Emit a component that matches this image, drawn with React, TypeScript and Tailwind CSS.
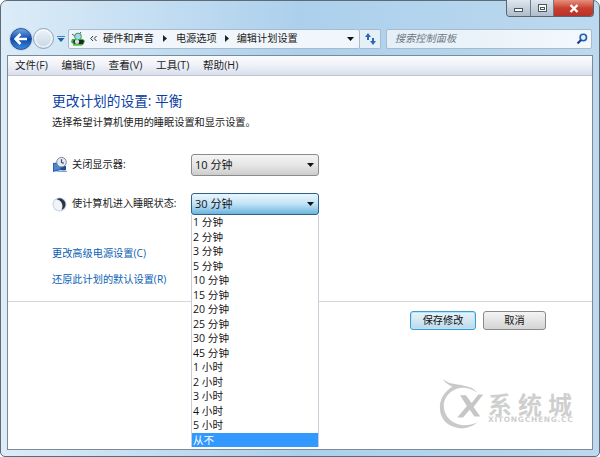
import React from 'react';

const FONT = "font-['Open_Sans','Noto_Sans_CJK_SC',sans-serif]";

const menus = ['文件(F)', '编辑(E)', '查看(V)', '工具(T)', '帮助(H)'];
const options = [
  '1 分钟', '2 分钟', '3 分钟', '5 分钟', '10 分钟', '15 分钟', '20 分钟', '25 分钟',
  '30 分钟', '45 分钟', '1 小时', '2 小时', '3 小时', '4 小时', '5 小时', '从不',
];

const Arrow = () => (
  <svg width="7" height="4" viewBox="0 0 7 4" className="shrink-0">
    <path d="M0 0h7L3.5 4z" fill="#111" />
  </svg>
);

const Crumb = () => (
  <svg width="4" height="7" viewBox="0 0 4 7" className="shrink-0 block">
    <path d="M0 0l4 3.5L0 7z" fill="#222" />
  </svg>
);

const NavButtons = () => (
  <div className="flex items-center w-[64px] h-[24px] ml-[9px]">
    <div className="w-[22px] h-[22px] rounded-full border border-[#28508c] bg-gradient-to-b from-[#6aa6e4] via-[#0f48ad] to-[#3a8ce0] flex items-center justify-center z-10 shadow-[0_0_0_1px_#c9dcee]">
      <svg width="14" height="12" viewBox="0 0 14 12">
        <path d="M6.5 1L1.5 6l5 5M2 6h11" stroke="#fff" strokeWidth="2.6" fill="none" />
      </svg>
    </div>
    <div className="w-[21px] h-[21px] ml-[1px] rounded-full border border-[#8ea4bc] bg-gradient-to-b from-[#eef4fa] to-[#c5d5e5] shadow-[inset_0_0_0_2px_#ffffff90]" />
    <svg width="8" height="6" viewBox="0 0 8 6" className="ml-[3px]">
      <path d="M0 0h8v1H0z" fill="#3d86c6" />
      <path d="M0.5 2h7L4 6z" fill="#1d5f9e" />
    </svg>
  </div>
);

const PowerIcon = () => (
  <svg width="15" height="16" viewBox="0 0 15 16" className="shrink-0">
    <path d="M1 6l8-1v8l-8 2z" fill="#2c5fae" />
    <path d="M2 7l6-.8V12l-6 1.4z" fill="#4c86cf" />
    <path d="M4 14.5l8-1.5 3 1v1H5z" fill="#8ba4c6" />
    <path d="M9 8l5 1v4l-5 0z" fill="#1f4d96" />
    <circle cx="9.5" cy="5.2" r="4.8" fill="#e4e9f0" stroke="#7d8896" />
    <path d="M9.5 2.2v3.2l2.2 1" stroke="#34507c" strokeWidth="1.2" fill="none" />
  </svg>
);

const MoonIcon = () => (
  <svg width="15" height="15" viewBox="0 0 15 15" className="shrink-0">
    <circle cx="7.5" cy="7.5" r="7" fill="#c4d2e6" />
    <circle cx="7.5" cy="7.5" r="6" fill="#f0f3f8" />
    <path d="M4.5 2.2A6 6 0 0 1 13.4 8.4 5.5 5.5 0 0 1 9.4 12.8 7 7 0 0 0 4.5 2.2z" fill="#2b3340" />
  </svg>
);

const GlobeIcon = () => (
  <svg width="16" height="16" viewBox="0 0 16 16" className="ml-[1px] shrink-0">
    <path d="M2 3l4 3M11 1L8 5" stroke="#555" strokeWidth="1" />
    <circle cx="8" cy="5.5" r="3.4" fill="#9fd7ee" stroke="#4c8f55" />
    <path d="M2 8h11l2 2-2 4H4L1 11z" fill="#3fae35" />
    <path d="M4 9h9l1 1-1 3H5l-2-2z" fill="#1d2a22" />
    <circle cx="7" cy="10.8" r="2.2" fill="#d8dfe4" />
    <path d="M3 14h9" stroke="#4fbf3f" strokeWidth="1.4" />
  </svg>
);

const Watermark = () => (
  <div className="absolute left-[438px] top-[376px] flex items-start text-[#cfcfcf] pointer-events-none">
    <svg width="50" height="56" viewBox="0 0 52 56" className="shrink-0">
      <path d="M5 2c7 6 15 5 22 7 6 1 11 3 14 7-5-3-10-5-15-5C15 11 6 20 6 30c0 11 9 19 20 20 6 0 11-1 15-3-7 6-16 8-24 5C7 49 1 40 2 29 3 21 8 14 15 10 11 8 7 6 5 2z" fill="#c9c9c9" />
      <path d="M23 19h6l6 8 7-9h5L37 31l7 10h-6l-5-7-7 8h-6l10-12z" fill="#c6c6c6" />
    </svg>
    <div className="flex flex-col ml-[0px] mt-[16px]">
      <span className="text-[24px] leading-[24px] tracking-[6px] font-['Noto_Sans_CJK_SC',sans-serif] font-bold">系统城</span>
      <span className="text-[7.5px] leading-[8px] tracking-[0.7px] font-['DejaVu_Sans',sans-serif] font-bold">XITONGCHENG.CC</span>
    </div>
  </div>
);

export default function App() {
  return (
    <div className={`${FONT} relative w-[600px] h-[457px] overflow-hidden bg-white`}>
      <div className="w-[600px] h-[457px] flex flex-col rounded-t-[7px] rounded-b-[5px] border border-[#5f6a75] bg-gradient-to-r from-[#dcecf8] via-[#acd0ec] to-[#bcd9ef] px-[6px] pb-[6px]">
        {/* caption buttons */}
        <div className="flex justify-end h-[17px] shrink-0 -mt-[1px] -mr-[1px]">
          <div className="flex h-[17px] w-[88px] rounded-b-[4px] border border-t-0 border-[#5a6570] overflow-hidden">
            <div className="w-[24px] flex items-center justify-center bg-gradient-to-b from-[#dfe7ef] to-[#aebccb] border-r border-[#6f7b87]">
              <div className="w-[9px] h-[4px] border border-[#4b5661] bg-white mt-[4px]" />
            </div>
            <div className="w-[23px] flex items-center justify-center bg-gradient-to-b from-[#dfe7ef] to-[#aebccb] border-r border-[#6f7b87]">
              <div className="w-[9px] h-[8px] border border-[#4b5661] bg-white flex items-center justify-center">
                <div className="w-[5px] h-[3px] border border-[#4b5661]" />
              </div>
            </div>
            <div className="flex-1 flex items-center justify-center bg-gradient-to-b from-[#e58f7e] via-[#c9402f] to-[#b8302a]">
              <svg width="10" height="9" viewBox="0 0 10 9">
                <path d="M1.5 1l7 7M8.5 1l-7 7" stroke="#fff" strokeWidth="2.4" />
              </svg>
            </div>
          </div>
        </div>
        {/* navigation row */}
        <div className="flex items-center h-[38px] shrink-0 -ml-[6px] pt-[6px] pb-[1px]">
          <NavButtons />
          <div className="flex items-center w-[292px] h-[20px] ml-[-6px] border border-[#a9bacb] rounded-[2px] bg-[#f0f6fb]">
            <GlobeIcon />
            <svg width="7" height="5" viewBox="0 0 7 5" className="ml-[4px] shrink-0">
              <path d="M3 0L.7 2.5 3 5M6.5 0L4.2 2.5 6.5 5" stroke="#333" strokeWidth="1" fill="none" />
            </svg>
            <span className="ml-[6px] text-[10.2px] text-[#222] whitespace-nowrap">硬件和声音</span>
            <span className="ml-[9px]"><Crumb /></span>
            <span className="ml-[9px] text-[10.2px] text-[#222] whitespace-nowrap">电源选项</span>
            <span className="ml-[8px]"><Crumb /></span>
            <span className="ml-[8px] text-[10.2px] text-[#222] whitespace-nowrap">编辑计划设置</span>
            <div className="ml-auto mr-[5px]"><Arrow /></div>
          </div>
          <div className="flex items-center justify-center w-[21px] h-[20px] border border-l-0 border-[#a9bacb] rounded-r-[2px] bg-[#e4eff8]">
            <svg width="13" height="12" viewBox="0 0 13 12">
              <path d="M4 0L1 4h2v3h2V4h2z" fill="#2c66b8" />
              <path d="M9 12l3-4h-2V5H8v3H6z" fill="#2c66b8" />
            </svg>
          </div>
          <div className="flex items-center w-[206px] h-[20px] ml-[5px] pl-[8px] pr-[3px] border border-[#a9bacb] rounded-[2px] bg-gradient-to-r from-[#e4eff8] to-[#f3f8fc]">
            <span className="text-[10.2px] italic text-[#6d7680] whitespace-nowrap">搜索控制面板</span>
            <svg width="12" height="12" viewBox="0 0 12 12" className="ml-auto">
              <circle cx="7.3" cy="4.5" r="3.2" stroke="#1f5fb4" strokeWidth="1.6" fill="#e6f0fa" />
              <path d="M5 7L1.5 10.5" stroke="#173f86" strokeWidth="2.2" />
            </svg>
          </div>
        </div>
        {/* client area */}
        <div className="relative flex-1 flex flex-col border border-[#7c8a98] bg-white min-h-0">
          <div className="flex items-center h-[20px] shrink-0 pl-[7px] gap-[13.7px] border-b border-[#b9c3d3] bg-gradient-to-b from-[#fbfcfe] via-[#eef1f8] to-[#dadfeb]">
            {menus.map((m) => (
              <span key={m} className="text-[10.6px] text-[#1e1e1e] whitespace-nowrap">{m}</span>
            ))}
          </div>
          <div className="flex-1 flex flex-col pl-[44px] pt-[15px]">
            <h1 className="text-[13.7px] leading-[20px] text-[#0b3fa5] font-normal whitespace-nowrap">更改计划的设置: 平衡</h1>
            <p className="mt-[4px] text-[10.2px] leading-[14px] text-[#222] whitespace-nowrap">选择希望计算机使用的睡眠设置和显示设置。</p>
            <div className="mt-[25px] flex items-center h-[22px]">
              <PowerIcon />
              <span className="ml-[5px] w-[119px] text-[10.2px] text-[#222] whitespace-nowrap">关闭显示器:</span>
              <div className="flex items-center w-[128px] h-[22px] px-[3px] pr-[4px] rounded-[3px] border border-[#8b8b8b] bg-gradient-to-b from-[#f4f4f4] via-[#e6e6e6] to-[#cdcdcd]">
                <span className="text-[11px] text-[#111] whitespace-nowrap">10 分钟</span>
                <div className="ml-auto"><Arrow /></div>
              </div>
            </div>
            <div className="mt-[17px] flex items-center h-[22px]">
              <MoonIcon />
              <span className="ml-[5px] w-[119px] text-[10.2px] text-[#222] whitespace-nowrap">使计算机进入睡眠状态:</span>
              <div className="flex items-center w-[128px] h-[22px] px-[3px] pr-[4px] rounded-[3px] border border-[#2c628b] bg-gradient-to-b from-[#ebf6fd] via-[#bfe3f7] to-[#6db3dc]">
                <span className="text-[11px] text-[#111] whitespace-nowrap">30 分钟</span>
                <div className="ml-auto"><Arrow /></div>
              </div>
            </div>
            <a className="mt-[31px] text-[10.2px] leading-[14px] text-[#0b5fb4] whitespace-nowrap">更改高级电源设置(C)</a>
            <a className="mt-[12px] text-[10.2px] leading-[14px] text-[#0b5fb4] whitespace-nowrap">还原此计划的默认设置(R)</a>
            <div className="mt-[15px] -ml-[44px] h-px bg-[#d6d6d6]" />
            <div className="mt-[9px] flex justify-end gap-[7px] pr-[46px]">
              <button className="w-[66px] h-[19px] rounded-[3px] border border-[#3c9ed3] bg-gradient-to-b from-[#e8f4fb] to-[#bcd9ea] text-[10.2px] leading-none text-[#111] shadow-[inset_0_0_0_1px_#b5e3f7]">保存修改</button>
              <button className="w-[63px] h-[19px] rounded-[3px] border border-[#8a8a8a] bg-gradient-to-b from-[#f4f4f4] to-[#d4d4d4] text-[10.2px] leading-none text-[#111]">取消</button>
            </div>
          </div>
        </div>
      </div>
      {/* open dropdown */}
      <div className="absolute left-[191px] top-[215px] w-[128px] h-[232px] border-x border-[#c9cdd6] bg-white flex flex-col">
        {options.map((o) => (
          <div
            key={o}
            className={`h-[14.5px] leading-[14.5px] pl-[1px] text-[10.6px] whitespace-nowrap ${o === '从不' ? 'bg-[#3399ff] text-white' : 'text-[#111]'}`}
          >
            {o}
          </div>
        ))}
      </div>
      <Watermark />
    </div>
  );
}
